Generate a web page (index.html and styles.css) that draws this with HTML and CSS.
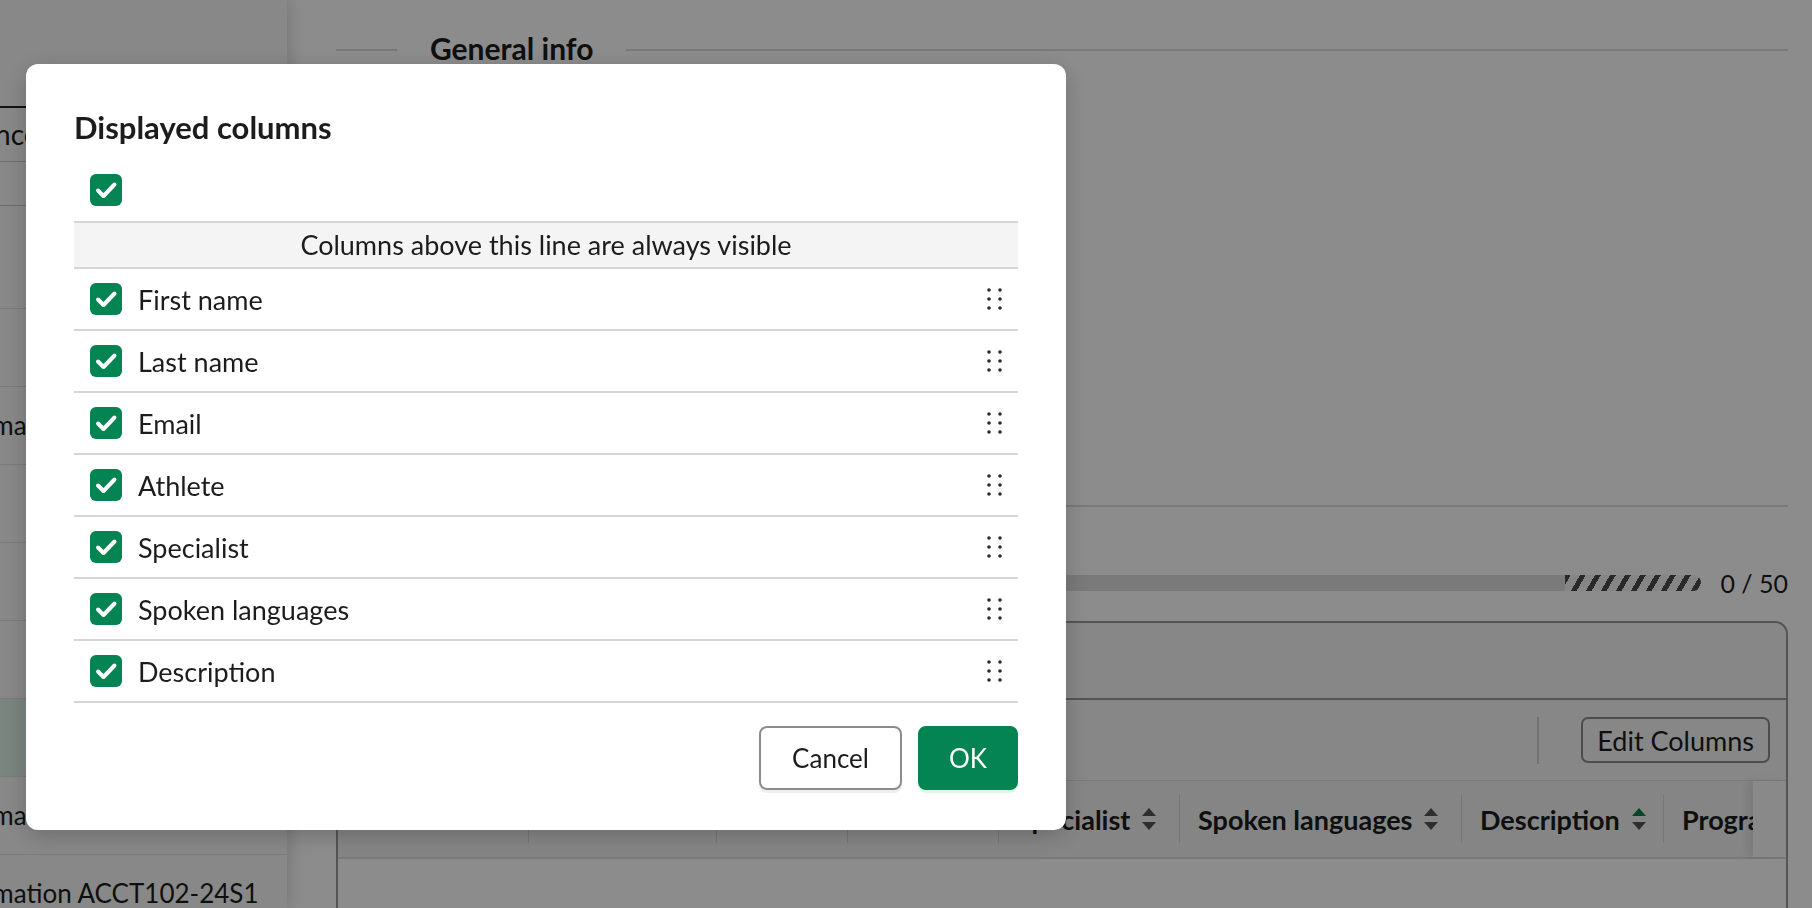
FILE: index.html
```html
<!DOCTYPE html>
<html lang="en">
<head>
    <meta charset="UTF-8">
    <meta name="viewport" content="width=device-width, initial-scale=1.0">
    <title>Displayed columns</title>
    <link rel="stylesheet" href="styles.css">
</head>
<body>
    <div class="app">
        <!-- Sidebar -->
        <aside class="sidebar">
            <div class="side-top"></div>
            <div class="side-search">Finance</div>
            <div class="side-filter"></div>
            <ul class="side-list">
                <li></li>
                <li></li>
                <li>Information ACCT100-24S1</li>
                <li></li>
                <li></li>
                <li></li>
                <li class="selected"></li>
                <li>Information ACCT101-24S1</li>
                <li>Information ACCT102-24S1</li>
            </ul>
        </aside>

        <!-- Main content -->
        <main class="main">
            <div class="legend">
                <span class="legend-line"></span>
                <h2>General info</h2>
                <span class="legend-line grow"></span>
            </div>
            <div class="general-body"></div>

            <div class="progress-row">
                <div class="progress">
                    <div class="progress-pending"></div>
                </div>
                <span class="progress-count">0 / 50</span>
            </div>

            <div class="card">
                <div class="card-top"></div>
                <div class="toolbar">
                    <span class="toolbar-sep"></span>
                    <button class="btn-outline">Edit Columns</button>
                </div>
                <div class="thead">
                    <div class="thead-scroll">
                        <div class="th" style="width: 190px"><span>First name</span><svg class="sort" viewBox="0 0 14 26"><path class="up" d="M0 10 7 2 14 10Z"/><path d="M0 16 7 24 14 16Z"/></svg></div>
                        <div class="th" style="width: 188px"><span>Last name</span><svg class="sort" viewBox="0 0 14 26"><path class="up" d="M0 10 7 2 14 10Z"/><path d="M0 16 7 24 14 16Z"/></svg></div>
                        <div class="th" style="width: 131px"><span>Email</span><svg class="sort" viewBox="0 0 14 26"><path class="up" d="M0 10 7 2 14 10Z"/><path d="M0 16 7 24 14 16Z"/></svg></div>
                        <div class="th" style="width: 151px"><span>Athlete</span><svg class="sort" viewBox="0 0 14 26"><path class="up" d="M0 10 7 2 14 10Z"/><path d="M0 16 7 24 14 16Z"/></svg></div>
                        <div class="th" style="width: 181px"><span>Specialist</span><svg class="sort" viewBox="0 0 14 26"><path class="up" d="M0 10 7 2 14 10Z"/><path d="M0 16 7 24 14 16Z"/></svg></div>
                        <div class="th" style="width: 282px"><span>Spoken languages</span><svg class="sort" viewBox="0 0 14 26"><path class="up" d="M0 10 7 2 14 10Z"/><path d="M0 16 7 24 14 16Z"/></svg></div>
                        <div class="th" style="width: 202px"><span>Description</span><svg class="sort active" viewBox="0 0 14 26"><path class="up" d="M0 10 7 2 14 10Z"/><path d="M0 16 7 24 14 16Z"/></svg></div>
                        <div class="th" style="width: 220px"><span>Program</span><svg class="sort" viewBox="0 0 14 26"><path class="up" d="M0 10 7 2 14 10Z"/><path d="M0 16 7 24 14 16Z"/></svg></div>
                    </div>
                    <div class="sticky-col"></div>
                </div>
                <div class="tbody"></div>
            </div>
        </main>
    </div>

    <div class="backdrop"></div>

    <!-- Displayed columns dialog -->
    <div class="modal">
        <h2>Displayed columns</h2>
        <div class="master-row">
            <span class="checkbox"><svg viewBox="0 0 32 32"><path d="M8 16.5 13.5 22 24.5 10.5"/></svg></span>
        </div>
        <div class="banner">Columns above this line are always visible</div>
        <ul class="col-list">
            <li><span class="checkbox"><svg viewBox="0 0 32 32"><path d="M8 16.5 13.5 22 24.5 10.5"/></svg></span><span class="col-name">First name</span><svg class="handle" viewBox="0 0 15 22"><circle cx="2" cy="2" r="1.8"/><circle cx="13" cy="2" r="1.8"/><circle cx="2" cy="11" r="1.8"/><circle cx="13" cy="11" r="1.8"/><circle cx="2" cy="20" r="1.8"/><circle cx="13" cy="20" r="1.8"/></svg></li>
            <li><span class="checkbox"><svg viewBox="0 0 32 32"><path d="M8 16.5 13.5 22 24.5 10.5"/></svg></span><span class="col-name">Last name</span><svg class="handle" viewBox="0 0 15 22"><circle cx="2" cy="2" r="1.8"/><circle cx="13" cy="2" r="1.8"/><circle cx="2" cy="11" r="1.8"/><circle cx="13" cy="11" r="1.8"/><circle cx="2" cy="20" r="1.8"/><circle cx="13" cy="20" r="1.8"/></svg></li>
            <li><span class="checkbox"><svg viewBox="0 0 32 32"><path d="M8 16.5 13.5 22 24.5 10.5"/></svg></span><span class="col-name">Email</span><svg class="handle" viewBox="0 0 15 22"><circle cx="2" cy="2" r="1.8"/><circle cx="13" cy="2" r="1.8"/><circle cx="2" cy="11" r="1.8"/><circle cx="13" cy="11" r="1.8"/><circle cx="2" cy="20" r="1.8"/><circle cx="13" cy="20" r="1.8"/></svg></li>
            <li><span class="checkbox"><svg viewBox="0 0 32 32"><path d="M8 16.5 13.5 22 24.5 10.5"/></svg></span><span class="col-name">Athlete</span><svg class="handle" viewBox="0 0 15 22"><circle cx="2" cy="2" r="1.8"/><circle cx="13" cy="2" r="1.8"/><circle cx="2" cy="11" r="1.8"/><circle cx="13" cy="11" r="1.8"/><circle cx="2" cy="20" r="1.8"/><circle cx="13" cy="20" r="1.8"/></svg></li>
            <li><span class="checkbox"><svg viewBox="0 0 32 32"><path d="M8 16.5 13.5 22 24.5 10.5"/></svg></span><span class="col-name">Specialist</span><svg class="handle" viewBox="0 0 15 22"><circle cx="2" cy="2" r="1.8"/><circle cx="13" cy="2" r="1.8"/><circle cx="2" cy="11" r="1.8"/><circle cx="13" cy="11" r="1.8"/><circle cx="2" cy="20" r="1.8"/><circle cx="13" cy="20" r="1.8"/></svg></li>
            <li><span class="checkbox"><svg viewBox="0 0 32 32"><path d="M8 16.5 13.5 22 24.5 10.5"/></svg></span><span class="col-name">Spoken languages</span><svg class="handle" viewBox="0 0 15 22"><circle cx="2" cy="2" r="1.8"/><circle cx="13" cy="2" r="1.8"/><circle cx="2" cy="11" r="1.8"/><circle cx="13" cy="11" r="1.8"/><circle cx="2" cy="20" r="1.8"/><circle cx="13" cy="20" r="1.8"/></svg></li>
            <li><span class="checkbox"><svg viewBox="0 0 32 32"><path d="M8 16.5 13.5 22 24.5 10.5"/></svg></span><span class="col-name">Description</span><svg class="handle" viewBox="0 0 15 22"><circle cx="2" cy="2" r="1.8"/><circle cx="13" cy="2" r="1.8"/><circle cx="2" cy="11" r="1.8"/><circle cx="13" cy="11" r="1.8"/><circle cx="2" cy="20" r="1.8"/><circle cx="13" cy="20" r="1.8"/></svg></li>
        </ul>
        <div class="modal-footer">
            <button class="btn-cancel">Cancel</button>
            <button class="btn-ok">OK</button>
        </div>
    </div>
</body>
</html>
```

FILE: styles.css
```css
html, body {
    height: 100%;
    margin: 0;
    padding: 0;
    overflow: hidden;
    font-family: Lato, "Noto Sans", sans-serif;
    color: #1c1c1c;
    background-color: #fff;
}
ul {
    list-style: none;
    margin: 0;
    padding: 0;
}
button {
    font-family: inherit;
    cursor: pointer;
}
.app {
    display: flex;
    height: 100vh;
}

/* Sidebar */
.sidebar {
    width: 287px;
    flex: none;
    background: #f7f7f7;
    box-shadow: 4px 0 14px rgba(0, 0, 0, 0.14);
    position: relative;
    z-index: 1;
    overflow: hidden;
}
.side-top {
    height: 106px;
}
.side-search {
    height: 53px;
    border-top: 2px solid #222;
    border-bottom: 1px solid #c4c4c4;
    margin-left: -57px;
    font-size: 28px;
    line-height: 53px;
    white-space: nowrap;
}
.side-filter {
    height: 43px;
    border-bottom: 1px solid #c4c4c4;
}
.side-list {
    margin-top: 25px;
    margin-left: -62px;
}
.side-list li {
    height: 77px;
    border-bottom: 1px solid #dedede;
    font-size: 26px;
    line-height: 77px;
    white-space: nowrap;
}
.side-list li.selected {
    background: #dff2e8;
}

/* Main */
.main {
    flex: 1;
    min-width: 0;
    padding: 30px 24px 0 49px;
    display: flex;
    flex-direction: column;
}
.legend {
    display: flex;
    align-items: center;
    gap: 33px;
    height: 36px;
}
.legend h2 {
    margin: 0;
    font-size: 30px;
    line-height: 36px;
    font-weight: 700;
}
.legend-line {
    width: 61px;
    height: 2px;
    margin-top: 4px;
    background: #dcdcdc;
}
.legend-line.grow {
    flex: 1;
}
.general-body {
    height: 439px;
    border-bottom: 2px solid #dcdcdc;
}
.progress-row {
    display: flex;
    align-items: center;
    gap: 19px;
    height: 30px;
    margin-top: 61px;
}
.progress {
    flex: 1;
    height: 16px;
    border-radius: 8px;
    background: #dedede;
    display: flex;
    justify-content: flex-end;
    overflow: hidden;
}
.progress-pending {
    width: 136px;
    background: repeating-linear-gradient(120deg, #4c4c4c 0 5px, #f5f5f5 5px 13px);
}
.progress-count {
    font-size: 25px;
}
.card {
    flex: 1;
    margin-top: 23px;
    border: 2px solid #9a9a9a;
    border-bottom: none;
    border-radius: 13px 13px 0 0;
    background: #f6f6f6;
    display: flex;
    flex-direction: column;
}
.card-top {
    height: 75px;
    border-bottom: 2px solid #9a9a9a;
}
.toolbar {
    height: 80px;
    display: flex;
    align-items: center;
    justify-content: flex-end;
    gap: 42px;
    padding-right: 16px;
    border-bottom: 1px solid #dcdcdc;
}
.toolbar-sep {
    width: 2px;
    height: 47px;
    background: #cfcfcf;
}
.btn-outline {
    height: 46px;
    padding: 0 14px;
    font-size: 27px;
    color: #1c1c1c;
    background: transparent;
    border: 2px solid #8a8a8a;
    border-radius: 7px;
}
.thead {
    height: 76px;
    display: flex;
    background: #f3f3f3;
    border-bottom: 2px solid #dcdcdc;
}
.thead-scroll {
    flex: 1;
    display: flex;
    align-items: center;
    overflow: hidden;
}
.th {
    flex: none;
    box-sizing: border-box;
    height: 48px;
    display: flex;
    align-items: center;
    gap: 12px;
    padding: 0 18px;
    font-size: 27px;
    font-weight: 700;
    white-space: nowrap;
}
.th + .th {
    border-left: 1px solid #d6d6d6;
}
.sort {
    width: 14px;
    height: 26px;
    flex: none;
    fill: #555;
}
.sort.active .up {
    fill: #0b7a4b;
}
.sticky-col {
    width: 33px;
    background: #fafafa;
    box-shadow: -6px 0 8px rgba(0, 0, 0, 0.08);
}
.tbody {
    flex: 1;
    background: #fff;
}

/* Dialog */
.backdrop {
    position: fixed;
    inset: 0;
    background: rgba(0, 0, 0, 0.45);
    z-index: 10;
}
.modal {
    position: fixed;
    left: 26px;
    top: 64px;
    width: 1040px;
    box-sizing: border-box;
    padding: 45px 48px 40px;
    background: #fff;
    border-radius: 12px;
    box-shadow: 0 6px 24px rgba(0, 0, 0, 0.2);
    z-index: 11;
}
.modal h2 {
    margin: 0 0 14px;
    font-size: 31px;
    line-height: 36px;
    font-weight: 700;
}
.master-row {
    height: 62px;
    display: flex;
    align-items: center;
    padding-left: 16px;
}
.checkbox {
    width: 32px;
    height: 32px;
    flex: none;
    border-radius: 6px;
    background: #038452;
    display: flex;
}
.checkbox svg {
    width: 32px;
    height: 32px;
    fill: none;
    stroke: #fff;
    stroke-width: 4;
    stroke-linecap: round;
    stroke-linejoin: round;
}
.banner {
    height: 44px;
    border-top: 2px solid #d6d6d6;
    border-bottom: 2px solid #d6d6d6;
    background: #f4f4f4;
    text-align: center;
    font-size: 27px;
    line-height: 44px;
}
.col-list li {
    height: 60px;
    display: flex;
    align-items: center;
    gap: 16px;
    padding: 0 16px 0 16px;
    border-bottom: 2px solid #d6d6d6;
}
.col-name {
    flex: 1;
    font-size: 27px;
}
.handle {
    width: 15px;
    height: 22px;
    fill: #2a2a2a;
}
.modal-footer {
    display: flex;
    justify-content: flex-end;
    gap: 16px;
    margin-top: 23px;
}
.btn-cancel, .btn-ok {
    height: 64px;
    font-size: 26px;
    border-radius: 8px;
}
.btn-cancel {
    padding: 0 31px;
    color: #1c1c1c;
    background: #fff;
    border: 2px solid #8c8c8c;
    box-shadow: 0 3px 0 #efefef;
}
.btn-ok {
    padding: 0 29px;
    color: #fff;
    background: #038452;
    border: 2px solid #038452;
    box-shadow: 0 3px 0 #ddf8eb;
}
```
